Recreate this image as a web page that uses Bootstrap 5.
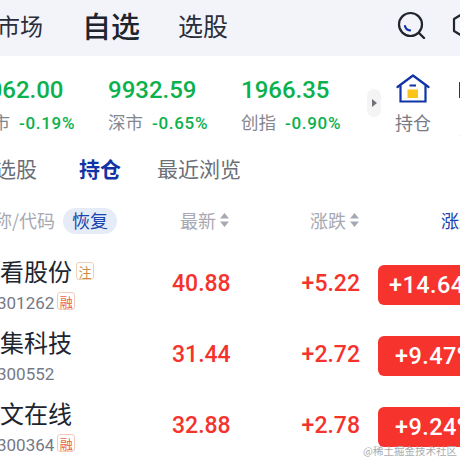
<!DOCTYPE html>
<html lang="zh">
<head>
<meta charset="utf-8">
<title>自选</title>
<link href="https://cdn.jsdelivr.net/npm/bootstrap@5.3.0/dist/css/bootstrap.min.css" rel="stylesheet">
<style>
html,body{width:460px;height:460px;overflow:hidden;background:#fff}
body{font-family:"Noto Sans CJK SC","Noto Sans",sans-serif;position:relative;color:#20242f}
.num{font-family:Roboto,"Liberation Sans",sans-serif}
.top-bar{height:56px;background:#f3f4f9;width:500px;margin-left:-3px;padding-bottom:6px}
.top-a{font-size:23px;line-height:1;color:#2a2e3a;width:85px}
.top-b{font-size:29px;line-height:1;font-weight:500;color:#20242f;width:96px}
.top-c{font-size:25px;line-height:1;color:#2a2e3a;width:219px}
.hex-ico{margin-left:25px}
.idx-row{height:86px;width:520px;margin-left:-25px}
.idx-item{width:133px;padding-top:20px}
.idx-val{font-size:24px;line-height:28px;font-weight:500;color:#0bb14d}
.idx-sub{font-size:17.5px;line-height:22px;margin-top:7px;color:#85878f;white-space:nowrap}
.idx-pct{font-size:17px;font-weight:500;color:#0bb14d;margin-left:9px;letter-spacing:.7px}
.arrow-wrap{width:37px}
.arrow-pill{width:14px;height:28px;border-radius:7px;background:#f4f4f5;margin-left:-7px;margin-top:33px}
.arrow-tri{width:0;height:0;border-left:5px solid #70727c;border-top:4px solid transparent;border-bottom:4px solid transparent;margin-left:1px}
.hold{width:62px;padding-top:18px;margin-left:-29px}
.hold-lbl{font-size:18px;line-height:22px;color:#777a84;margin-top:7px}
.next-item{margin-left:15px;padding-top:26px}
.next-ico{width:6px;height:16px;border-left:2px solid #1034a6}
.next-lbl{font-size:18px;line-height:22px;color:#777a84;margin-top:19px}
.tabs{height:58px;width:520px;margin-left:-5px;padding-bottom:7px;font-size:21px;line-height:28px;color:#6c6f78}
.tab-a{width:84px}
.tab-b{width:78px;color:#1034a6;font-weight:700}
.head-row{height:40px;width:520px;font-size:18px;line-height:26px;color:#a6a9b3}
.head-name{width:186px;margin-left:-6px;white-space:nowrap}
.pill{display:inline-block;width:54px;height:26px;line-height:25px;border-radius:13px;background:#e5ebf7;color:#1a45ad;text-align:center;margin-left:8px}
.head-new{width:130px}
.head-chg{width:131px}
.head-pct{color:#1a45ad}
.sort{display:inline-block;vertical-align:1px;margin-left:4px}
.list-rows{margin-top:9px}
.stock{height:71px;width:560px}
.stock-left{width:172px}
.stock-name{font-size:24px;line-height:32px;color:#20242f;white-space:nowrap}
.stock-code{font-size:17px;line-height:24px;color:#767985;margin-top:4px;margin-left:-3px;white-space:nowrap}
.tag{display:inline-flex;align-items:center;justify-content:center;width:18px;height:18px;border-radius:3px;font-size:13px;line-height:1;vertical-align:2px;font-family:"Noto Sans CJK SC",sans-serif}
.tag-zhu{border:1px solid #ecd2b6;color:#c98a4a;margin-left:4px;vertical-align:4px}
.tag-rong{border:1px solid #f6c9bc;color:#e8633f;margin-left:3px}
.price{width:57px;font-size:23px;font-weight:500;color:#f5332d;white-space:nowrap}
.change{width:131px;text-align:right;font-size:23px;font-weight:500;color:#f5332d}
.rate{width:120px;height:40px;margin-left:18px;border-radius:6px;background:#f7332e;color:#fff;font-size:23.5px;font-weight:500;line-height:40px;padding-left:11px;letter-spacing:.4px;white-space:nowrap}
.rate-two{padding-left:17px}
.mark-txt{position:absolute;right:3px;bottom:1px;font-size:10.5px;line-height:16px;color:#a9abad;white-space:nowrap}
</style>
</head>
<body>
<header class="top-bar d-flex align-items-center">
  <span class="top-a">市场</span>
  <span class="top-b">自选</span>
  <span class="top-c">选股</span>
  <svg width="30" height="28" viewBox="0 0 30 28" fill="none" aria-hidden="true">
    <circle cx="13.5" cy="13.5" r="11.5" stroke="#20242f" stroke-width="2.2"/>
    <path d="M22 22l5 5" stroke="#20242f" stroke-width="2.4" stroke-linecap="round"/>
    <path d="M8 15c.6 2.6 2.6 4.2 5 4.4" stroke="#1034a6" stroke-width="2.2" stroke-linecap="round"/>
  </svg>
  <svg class="hex-ico" width="24" height="28" viewBox="0 0 24 28" fill="none" aria-hidden="true">
    <path d="M12 2l10 6v12l-10 6-10-6V8z" stroke="#20242f" stroke-width="2.2" stroke-linejoin="round"/>
  </svg>
</header>

<section class="idx-row d-flex">
  <div class="idx-item"><div class="idx-val num">3062.00</div><div class="idx-sub">沪市<span class="idx-pct num">-0.19%</span></div></div>
  <div class="idx-item"><div class="idx-val num">9932.59</div><div class="idx-sub">深市<span class="idx-pct num">-0.65%</span></div></div>
  <div class="idx-item"><div class="idx-val num">1966.35</div><div class="idx-sub">创指<span class="idx-pct num">-0.90%</span></div></div>
  <div class="arrow-wrap"><div class="arrow-pill d-flex align-items-center justify-content-center"><div class="arrow-tri"></div></div></div>
  <div class="hold text-center">
    <svg width="34" height="30" viewBox="0 0 34 30" fill="none" aria-hidden="true">
      <path d="M1.500 13L17 1.500 32.500 13" stroke="#1034a6" stroke-width="2.200" stroke-linecap="round" stroke-linejoin="round"/>
      <path d="M4.500 11.500V27.500H29.500V11.500" stroke="#1034a6" stroke-width="2.200"/>
      <rect x="11.500" y="15.500" width="10.500" height="8.500" fill="#fcc419"/>
      <rect x="13.500" y="10.500" width="6.500" height="2" fill="#1034a6"/>
    </svg>
    <div class="hold-lbl">持仓</div>
  </div>
  <div class="next-item"><div class="next-ico"></div><div class="next-lbl">工具</div></div>
</section>

<nav class="tabs d-flex align-items-center">
  <span class="tab-a">选股</span>
  <span class="tab-b">持仓</span>
  <span>最近浏览</span>
</nav>

<div class="head-row d-flex align-items-center">
  <div class="head-name">称/代码<span class="pill">恢复</span></div>
  <div class="head-new">最新<svg class="sort" width="9" height="14" viewBox="0 0 9 14" aria-hidden="true"><path d="M4.500 0L9 5.500H0zM4.500 14L0 8.500H9z" fill="#a6a9b3"/></svg></div>
  <div class="head-chg">涨跌<svg class="sort" width="9" height="14" viewBox="0 0 9 14" aria-hidden="true"><path d="M4.500 0L9 5.500H0zM4.500 14L0 8.500H9z" fill="#a6a9b3"/></svg></div>
  <div class="head-pct">涨跌幅</div>
</div>

<div class="list-rows">
  <div class="stock d-flex align-items-center">
    <div class="stock-left"><div class="stock-name">看股份<span class="tag tag-zhu">注</span></div><div class="stock-code num">301262<span class="tag tag-rong">融</span></div></div>
    <div class="price num">40.88</div><div class="change num">+5.22</div><div class="rate num">+14.64%</div>
  </div>
  <div class="stock d-flex align-items-center">
    <div class="stock-left"><div class="stock-name">集科技</div><div class="stock-code num">300552</div></div>
    <div class="price num">31.44</div><div class="change num">+2.72</div><div class="rate rate-two num">+9.47%</div>
  </div>
  <div class="stock d-flex align-items-center">
    <div class="stock-left"><div class="stock-name">文在线</div><div class="stock-code num">300364<span class="tag tag-rong">融</span></div></div>
    <div class="price num">32.88</div><div class="change num">+2.78</div><div class="rate rate-two num">+9.24%</div>
  </div>
</div>
<div class="mark-txt">@稀土掘金技术社区</div>
<script src="https://cdn.jsdelivr.net/npm/bootstrap@5.3.0/dist/js/bootstrap.bundle.min.js"></script>
</body>
</html>
